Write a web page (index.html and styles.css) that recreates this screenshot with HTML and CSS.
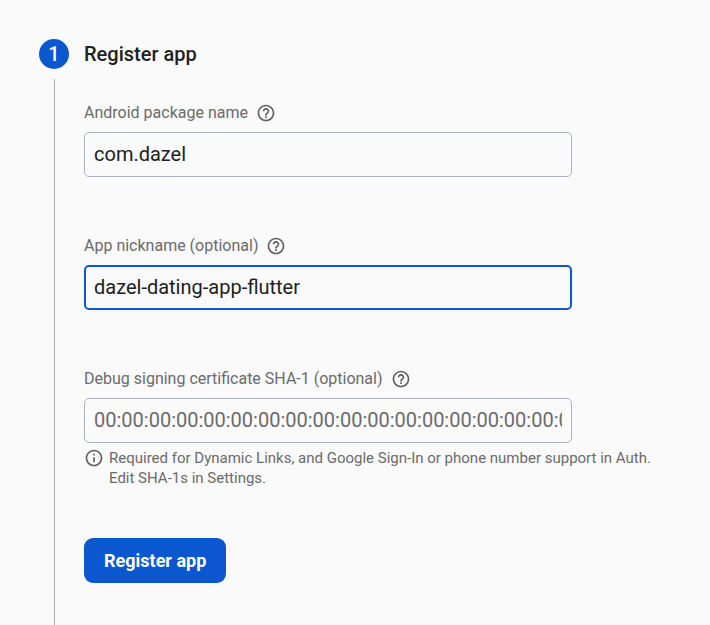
FILE: index.html
```html
<!DOCTYPE html>
<html lang="en">
<head>
<meta charset="utf-8">
<meta name="viewport" content="width=device-width, initial-scale=1">
<title>Register app</title>
<link rel="stylesheet" href="styles.css">
</head>
<body>
<svg class="sprite" aria-hidden="true">
  <symbol id="help" viewBox="0 0 24 24"><path d="M11 18h2v-2h-2v2zm1-16C6.48 2 2 6.48 2 12s4.48 10 10 10 10-4.480 10-10S17.520 2 12 2zm0 18c-4.410 0-8-3.590-8-8s3.590-8 8-8 8 3.590 8 8-3.590 8-8 8zm0-14c-2.210 0-4 1.790-4 4h2c0-1.100.9-2 2-2s2 .9 2 2c0 2-3 1.750-3 5h2c0-2.250 3-2.500 3-5 0-2.210-1.790-4-4-4z"/></symbol>
  <symbol id="info" viewBox="0 0 24 24"><path d="M11 7h2v2h-2zm0 4h2v6h-2zm1-9C6.480 2 2 6.480 2 12s4.480 10 10 10 10-4.480 10-10S17.520 2 12 2zm0 18c-4.410 0-8-3.590-8-8s3.590-8 8-8 8 3.590 8 8-3.590 8-8 8z"/></symbol>
</svg>
<main class="step">
  <div class="rail">
    <span class="number">1</span>
    <span class="line"></span>
  </div>
  <form class="content">
    <h1 class="title">Register app</h1>
    <div class="fields">
      <div class="field">
        <div class="caption">
          <label for="package">Android package name</label>
          <svg class="icon" aria-hidden="true"><use href="#help"/></svg>
        </div>
        <input class="input" id="package" type="text" value="com.dazel">
      </div>
      <div class="field">
        <div class="caption">
          <label for="nickname">App nickname (optional)</label>
          <svg class="icon" aria-hidden="true"><use href="#help"/></svg>
        </div>
        <input class="input active" id="nickname" type="text" value="dazel-dating-app-flutter">
      </div>
      <div class="field">
        <div class="caption">
          <label for="sha">Debug signing certificate SHA-1 (optional)</label>
          <svg class="icon" aria-hidden="true"><use href="#help"/></svg>
        </div>
        <input class="input" id="sha" type="text" placeholder="00:00:00:00:00:00:00:00:00:00:00:00:00:00:00:00:00:00:00:00">
        <div class="hint">
          <svg class="icon" aria-hidden="true"><use href="#info"/></svg>
          <p class="hint-text">Required for Dynamic Links, and Google Sign-In or phone number support in Auth. Edit SHA-1s in Settings.</p>
        </div>
      </div>
    </div>
    <button class="submit" type="button">Register app</button>
  </form>
</main>
</body>
</html>
```
FILE: styles.css
```css
* {
  box-sizing: border-box;
}

body {
  margin: 0;
  background: #fafafa;
  color: #212121;
  font-family: Roboto, "Liberation Sans", sans-serif;
}

.sprite {
  display: none;
}

.step {
  display: flex;
  gap: 15px;
  min-height: 100vh;
  padding: 39px 48px 0 39px;
}

.rail {
  display: flex;
  flex: none;
  flex-direction: column;
  align-items: center;
  gap: 10px;
  width: 30px;
}

.number {
  width: 30px;
  height: 30px;
  border-radius: 50%;
  background: #0b57d0;
  color: #fff;
  font-size: 20px;
  font-weight: 500;
  line-height: 30px;
  text-align: center;
}

.line {
  flex: 1;
  width: 1px;
  background: #a8b3c8;
}

.content {
  flex: 1;
  min-width: 0;
  padding-bottom: 42px;
}

.title {
  margin: 0 0 32px;
  font-size: 20px;
  font-weight: 500;
  line-height: 30px;
}

.fields {
  display: flex;
  flex-direction: column;
  gap: 57px;
  margin-bottom: 50px;
}

.field {
  display: flex;
  flex-direction: column;
}

.caption {
  display: flex;
  align-items: center;
  gap: 8px;
  height: 24px;
  margin-bottom: 7px;
  color: #6b6b6b;
  font-size: 16px;
}

.caption label {
  padding-bottom: 2px;
}

.icon {
  flex: none;
  width: 20px;
  height: 20px;
  fill: #616161;
}

.input {
  width: 100%;
  max-width: 488px;
  height: 45px;
  padding: 0 9px 2px;
  border: 1px solid #a8b3c8;
  border-radius: 5px;
  outline: none;
  background: #fafafa;
  color: #212121;
  font: 20px Roboto, "Liberation Sans", sans-serif;
}

.input::placeholder {
  color: #6b6b6b;
  opacity: 1;
}

.active {
  padding: 0 8px 2px;
  border: 2px solid #0b57d0;
}

.hint {
  display: flex;
  gap: 5px;
  margin-top: 5px;
}

.hint-text {
  margin: 0;
  color: #6b6b6b;
  font-size: 15px;
  line-height: 20px;
}

.submit {
  height: 45px;
  padding: 0 20px;
  border: 0;
  border-radius: 9px;
  background: #0b57d0;
  color: #fff;
  font: 700 18px Roboto, "Liberation Sans", sans-serif;
}
```
